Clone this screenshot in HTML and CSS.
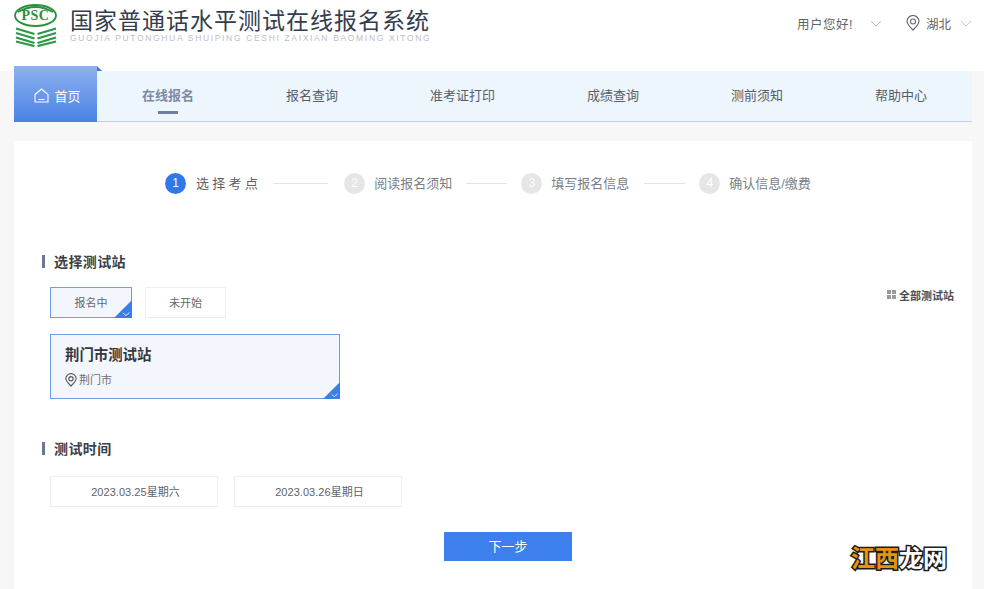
FILE: index.html
```html
<!DOCTYPE html>
<html lang="zh-CN">
<head>
<meta charset="utf-8">
<title>国家普通话水平测试在线报名系统</title>
<link rel="stylesheet" href="styles.css">
</head>
<body>
<header class="top">
  <div class="brand">
    <svg class="logo" width="44" height="44" viewBox="0 0 44 44">
      <ellipse cx="21.500" cy="12.500" rx="20.500" ry="10.500" fill="none" stroke="#2a8f3e" stroke-width="1.800"/>
      <path d="M4 9 Q21.500 -1 39 9" fill="none" stroke="#2a8f3e" stroke-width="2"/>
      <text x="21.500" y="17" text-anchor="middle" class="logo-text">PSC</text>
      <path d="M2 25.500 L20.500 31 M2 30 L20.500 35.500 M2 34.500 L20.500 40 M2 38.500 L20.500 43 M42 25.500 L23.500 31 M42 30 L23.500 35.500 M42 34.500 L23.500 40 M42 38.500 L23.500 43" stroke="#2a9a45" stroke-width="2.300" fill="none"/>
    </svg>
    <div class="brand-text">
      <div class="brand-title">国家普通话水平测试在线报名系统</div>
      <div class="brand-sub">GUOJIA PUTONGHUA SHUIPING CESHI ZAIXIAN BAOMING XITONG</div>
    </div>
  </div>
  <div class="user">
    <span class="hello">用户您好!</span>
    <svg class="chev" width="12" height="7" viewBox="0 0 12 7"><path d="M1 1 L6 6 L11 1" fill="none" stroke="#c4c8cc" stroke-width="1"/></svg>
    <svg class="pin-top" width="14" height="16" viewBox="0 0 14 16"><path d="M7 15 C3 11 1 8.500 1 6.500 A6 6 0 0 1 13 6.500 C13 8.500 11 11 7 15 Z" fill="none" stroke="#666" stroke-width="1.100"/><circle cx="7" cy="6.500" r="2.500" fill="none" stroke="#666" stroke-width="1.100"/></svg>
    <span class="region">湖北</span>
    <svg class="chev" width="12" height="7" viewBox="0 0 12 7"><path d="M1 1 L6 6 L11 1" fill="none" stroke="#c4c8cc" stroke-width="1"/></svg>
  </div>
</header>

<nav class="nav">
  <a class="home">
    <svg width="15" height="15" viewBox="0 0 15 15"><path d="M1 6.500 L7.500 1 L14 6.500 V14 H1 Z M4.500 11.500 H10.500" fill="none" stroke="#fff" stroke-width="1.100"/></svg>
    <span>首页</span>
  </a>
  <div class="nav-items">
    <a class="nav-item active">在线报名</a>
    <a class="nav-item">报名查询</a>
    <a class="nav-item">准考证打印</a>
    <a class="nav-item">成绩查询</a>
    <a class="nav-item">测前须知</a>
    <a class="nav-item">帮助中心</a>
  </div>
</nav>

<main class="card">
  <ol class="steps">
    <li class="step current"><i>1</i><span class="spaced">选择考点</span></li>
    <li class="line l55"></li>
    <li class="step"><i>2</i><span>阅读报名须知</span></li>
    <li class="line l41"></li>
    <li class="step"><i>3</i><span>填写报名信息</span></li>
    <li class="line l41 last"></li>
    <li class="step"><i>4</i><span>确认信息/缴费</span></li>
  </ol>

  <h2 class="sec-title first">选择测试站</h2>
  <div class="tabs-row">
    <div class="tabs">
      <button class="tab selected">报名中<svg class="tick" width="18" height="18" viewBox="0 0 18 18"><path d="M18 0 V18 H0 Z" fill="#3a7eea"/><path d="M9 13 L12 15.500 L15.500 12.500" fill="none" stroke="#dbe8fb" stroke-width="1"/></svg></button>
      <button class="tab">未开始</button>
    </div>
    <a class="all">
      <svg width="9" height="9" viewBox="0 0 9 9"><path d="M0 0 H4 V4 H0 Z M5 0 H9 V4 H5 Z M0 5 H4 V9 H0 Z M5 5 H9 V9 H5 Z" fill="#9a9a9a"/></svg>
      全部测试站
    </a>
  </div>

  <div class="site">
    <div class="site-name">荆门市测试站</div>
    <div class="site-city">
      <svg width="12" height="14" viewBox="0 0 14 16"><path d="M7 15 C3 11 1 8.500 1 6.500 A6 6 0 0 1 13 6.500 C13 8.500 11 11 7 15 Z" fill="none" stroke="#555" stroke-width="1.300"/><circle cx="7" cy="6.500" r="2.500" fill="none" stroke="#555" stroke-width="1.300"/></svg>
      荆门市
    </div>
    <svg class="tick" width="17" height="17" viewBox="0 0 18 18"><path d="M18 0 V18 H0 Z" fill="#3a7eea"/><path d="M9 13 L12 15.500 L15.500 12.500" fill="none" stroke="#dbe8fb" stroke-width="1"/></svg>
  </div>

  <h2 class="sec-title second">测试时间</h2>
  <div class="dates">
    <div class="date">2023.03.25星期六</div>
    <div class="date">2023.03.26星期日</div>
  </div>
  <div class="actions"><button class="next">下一步</button></div>
</main>

<div class="watermark"><span class="wm-o">江西</span><span class="wm-w">龙网</span></div>
</body>
</html>
```
FILE: styles.css
```css
* { box-sizing: border-box; }
html, body { margin: 0; padding: 0; }
body {
  width: 984px;
  height: 589px;
  overflow: hidden;
  position: relative;
  background: #f7f7f7;
  color: #555;
  font-family: "Liberation Sans", "Noto Sans CJK SC", sans-serif;
}
a { color: inherit; text-decoration: none; }
h2, ol { margin: 0; padding: 0; }
ol { list-style: none; }
button { font: inherit; cursor: pointer; }

.top {
  height: 71px;
  background: #fff;
  padding: 3px 12px 0 14px;
  display: flex;
  justify-content: space-between;
  align-items: flex-start;
}
.brand { display: flex; gap: 12px; }
.logo { display: block; }
.logo-text { font: bold 14px "Liberation Serif", serif; fill: #2a8f3e; letter-spacing: .5px; }
.brand-text { padding-top: 7px; }
.brand-title {
  font-family: "Liberation Serif", "Noto Sans CJK SC", serif;
  font-size: 23px;
  line-height: 24px;
  letter-spacing: 1px;
  color: #333d4d;
  white-space: nowrap;
}
.brand-sub {
  font-size: 8.500px;
  line-height: 8px;
  letter-spacing: 1.660px;
  color: #bcc0c6;
  white-space: nowrap;
}
.user {
  display: flex;
  align-items: center;
  height: 16px;
  margin-top: 12px;
  font-size: 12.500px;
  color: #5f6368;
}
.hello { letter-spacing: .5px; }
.user .hello + .chev { margin-left: 17px; }
.pin-top { margin-left: 24px; margin-right: 6px; }
.user .region + .chev { margin-left: 9px; }

.nav {
  height: 51px;
  margin: 0 12px 0 14px;
  background: #edf5fd;
  border-bottom: 1px solid #c5cfdb;
  display: flex;
  align-items: center;
  position: relative;
  font-size: 13px;
}
.home {
  position: relative;
  align-self: flex-end;
  width: 83px;
  height: 56px;
  margin-bottom: -1px;
  padding: 2px 0 0 4px;
  background: linear-gradient(#8db2ee, #4a82e6);
  color: #fff;
  display: flex;
  align-items: center;
  justify-content: center;
  gap: 5px;
}
.home::after {
  content: "";
  position: absolute;
  left: 83px;
  top: 0;
  border-top: 5px solid transparent;
  border-left: 5px solid #4a78c8;
}
.nav-items {
  display: flex;
  gap: 92px;
  padding: 0 0 4px 45px;
  color: #565e69;
}
.nav-item { position: relative; white-space: nowrap; }
.nav-item.active { font-weight: bold; color: #7c8ba3; }
.nav-item.active::after {
  content: "";
  position: absolute;
  left: 16px;
  bottom: -10px;
  width: 20px;
  height: 3px;
  background: #6f7f9c;
}

.card {
  margin: 19px 12px 0 14px;
  height: 460px;
  background: #fff;
  padding: 31px 18px 0 28px;
}
.steps {
  display: flex;
  align-items: center;
  height: 22px;
  padding-left: 123px;
  font-size: 13px;
  color: #7a7f85;
}
.step { display: flex; align-items: center; gap: 9px; white-space: nowrap; }
.step span { padding-bottom: 2px; }
.step i {
  width: 21px;
  height: 21px;
  border-radius: 50%;
  background: #e6e6e6;
  color: #fff;
  font-style: normal;
  font-size: 12px;
  display: flex;
  align-items: center;
  justify-content: center;
}
.step.current i { background: #3279e8; }
.step.current { gap: 10px; color: #5c6066; }
.spaced { letter-spacing: 3.300px; }
.line { height: 1px; background: #e4e4e4; }
.l55 { width: 55px; margin: 0 16px 0 12px; }
.l41 { width: 41px; margin: 0 14px; }
.l41.last { margin-left: 15px; }

.sec-title {
  position: relative;
  padding-left: 12px;
  font-size: 14px;
  line-height: 20px;
  letter-spacing: .4px;
  color: #3c4048;
}
.sec-title::before {
  content: "";
  position: absolute;
  left: 0;
  top: 3px;
  width: 3px;
  height: 13px;
  background: #6d7890;
}
.sec-title.first { margin-top: 58px; }
.sec-title.second { margin-top: 40px; }

.tabs-row {
  display: flex;
  justify-content: space-between;
  margin-top: 15px;
  padding-left: 8px;
}
.tabs { display: flex; gap: 13px; }
.tab {
  position: relative;
  width: 81px;
  height: 31px;
  padding: 0 0 2px;
  background: #fff;
  border: 1px solid #eee;
  color: #63676c;
  font-size: 11px;
}
.tab.selected { width: 82px; background: #f3f7fd; border-color: #6f9de6; }
.tick { position: absolute; right: -1px; bottom: -1px; display: block; }
.all {
  display: flex;
  align-items: center;
  gap: 3px;
  height: 15px;
  font-size: 11px;
  font-weight: bold;
  color: #4b4f55;
}

.site {
  position: relative;
  width: 290px;
  height: 65px;
  margin: 16px 0 0 8px;
  padding: 10px 14px 0;
  background: #f3f7fd;
  border: 1px solid #6f9de6;
}
.site-name { font-size: 14.400px; line-height: 20px; font-weight: bold; color: #33373d; }
.site-city {
  display: flex;
  align-items: center;
  gap: 2px;
  margin-top: 7px;
  font-size: 11px;
  line-height: 16px;
  color: #6c7076;
}

.dates { display: flex; gap: 16px; margin-top: 17px; padding-left: 8px; }
.date {
  width: 168px;
  height: 31px;
  padding: 0 0 2px 3px;
  border: 1px solid #eeeeee;
  background: #fff;
  display: flex;
  align-items: center;
  justify-content: center;
  font-size: 11px;
  letter-spacing: .05px;
  color: #5f6368;
}
.actions { margin-top: 25px; padding-left: 402px; }
.next {
  display: block;
  width: 128px;
  height: 29px;
  padding: 0 0 2px;
  border: 0;
  background: #3d7fec;
  color: #fff;
  font-size: 13px;
}

.watermark {
  position: absolute;
  left: 851px;
  top: 545px;
  font-size: 24px;
  line-height: 28px;
  font-weight: bold;
  white-space: nowrap;
  -webkit-text-stroke: 3px #1c1c1c;
}
.wm-o { color: #e8920e; paint-order: stroke fill; }
.wm-w { color: #fff; paint-order: stroke fill; }
```
